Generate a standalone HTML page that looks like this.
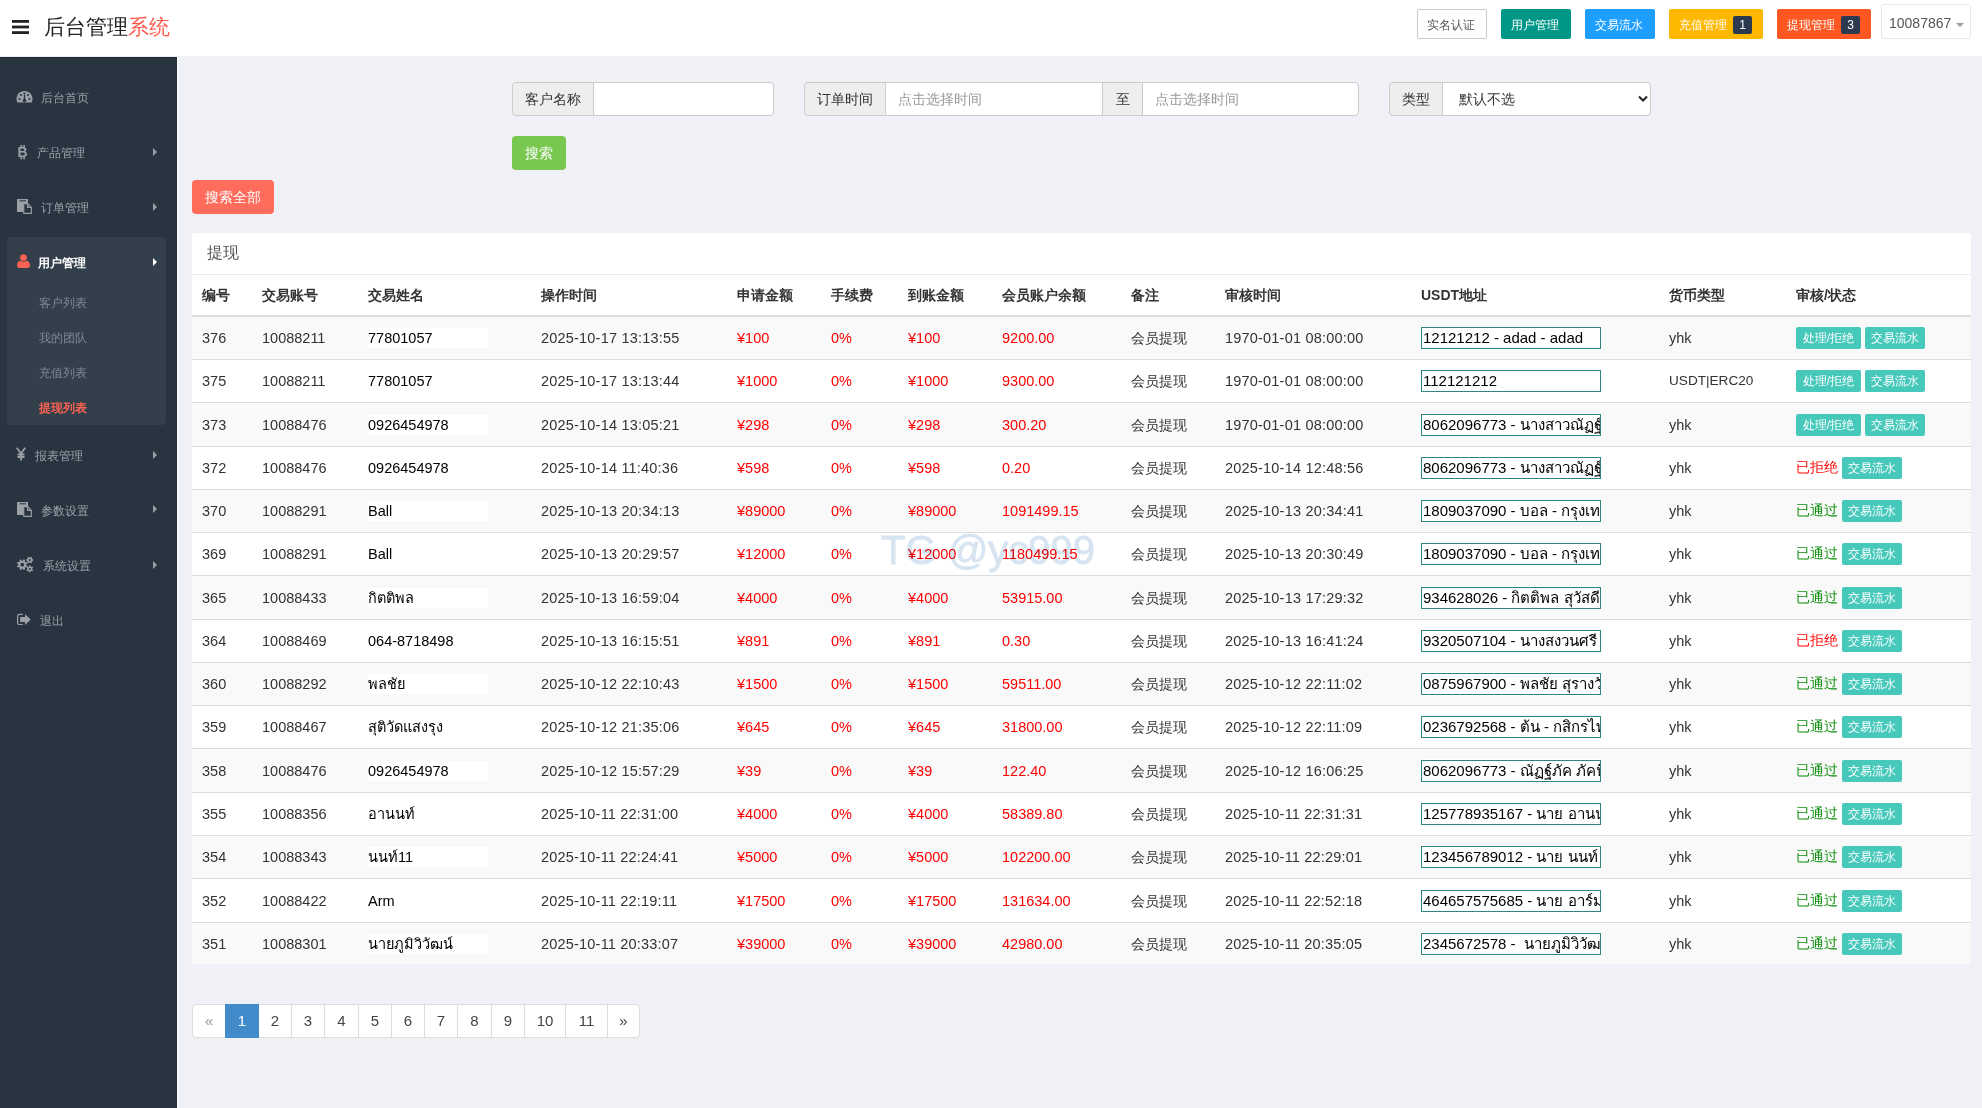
<!DOCTYPE html>
<html><head><meta charset="utf-8"><title>后台管理系统</title>
<style>
*{box-sizing:border-box}
html,body{margin:0;padding:0;width:1982px;height:1108px;overflow:hidden;background:#f0f1f6;font-family:"Liberation Sans",sans-serif;color:#333}
.a{position:absolute;white-space:nowrap}
#hdr{position:absolute;left:0;top:0;width:1982px;height:56px;background:#fff}
#title{position:absolute;left:44px;top:14px;font-size:21px;line-height:26px;color:#222;white-space:nowrap}
#title b{font-weight:normal;color:#ff5c4d}
.hb{position:absolute;top:9px;height:30px;font-size:12px;line-height:32px;color:#fff;border-radius:2px;padding-left:10px;white-space:nowrap}
.badge{position:absolute;top:7px;width:19px;height:18px;background:#2c3a50;border-radius:2px;color:#fff;font-size:12px;line-height:18px;text-align:center}
#side{position:absolute;left:0;top:57px;width:177px;height:1051px;background:#293441;border-top:1px solid #1e2935;border-right:1px solid #222d3a}
#sideline{position:absolute;left:177px;top:56px;width:1px;height:1052px;background:#fff}
.mi{position:absolute;font-size:12px;line-height:14px;color:#9ca1a8;white-space:nowrap}
.arr{position:absolute;left:153px;width:0;height:0;border-top:4px solid transparent;border-bottom:4px solid transparent;border-left:4px solid #9ca1a8}
.ic{position:absolute}
.grp{position:absolute;left:7px;top:237px;width:159px;height:188px;background:#343f4c;border-radius:4px}
.ig{position:absolute;top:82px;height:34px;font-size:14px;white-space:nowrap}
.ad{position:absolute;top:0;height:34px;background:#eee;border:1px solid #ccc;color:#333;line-height:32px;text-align:center}
.inp{position:absolute;top:0;height:34px;background:#fff;border:1px solid #ccc;color:#999;line-height:32px;padding-left:12px}
.btn1{position:absolute;height:34px;border-radius:4px;color:#fff;font-size:14px;line-height:34px;text-align:center;white-space:nowrap}
#panel{position:absolute;left:192px;top:233px;width:1779px;height:731px;background:#fff;border-radius:3px}
#ptitle{position:absolute;left:15px;top:9px;font-size:16px;line-height:22px;color:#555}
#phead{position:absolute;left:0;top:41px;width:1779px;height:1px;background:#e9ecf0}
.th{position:absolute;top:55px;font-size:14px;line-height:14px;font-weight:bold;color:#333;white-space:nowrap}
#thb{position:absolute;left:0;top:82px;width:1779px;height:2px;background:#ddd}
.row{position:absolute;left:0;width:1779px;background:#fff}
.row.s{background:#f9f9f9}
.row.bt{border-top:1px solid #ddd}
.row .c{position:absolute;top:50%;transform:translateY(-50%);font-size:14.5px;line-height:16px;white-space:nowrap;color:#333}
.row .red{color:#f00}
.row .dt{letter-spacing:0.2px}
.row .ok{color:#0c8f0c;font-size:14px;margin-top:-1px}
.row .rej{color:#f00;font-size:14px;margin-top:-1px}
.row .nm{position:absolute;top:50%;margin-top:-10px;height:20px;width:120px;background:#fff;font-size:14.5px;line-height:20px;color:#000;white-space:nowrap;overflow:hidden}
.row .addr{position:absolute;top:50%;margin-top:-11px;height:22px;width:180px;background:#fff;border:1px solid #2f8580;box-shadow:0 0 0 1px #fff;font-size:15px;line-height:20px;color:#000;white-space:pre;overflow:hidden;padding-left:1px}
.row .btn{position:absolute;top:50%;margin-top:-11px;height:22px;background:#46c8bb;border-radius:2px;color:#fff;font-size:12px;line-height:22px;text-align:center;white-space:nowrap}
#pg{position:absolute;left:0;top:0}
.pi{position:absolute;top:1004px;height:34px;background:#fff;border:1px solid #ddd;color:#444;font-size:15px;line-height:32px;text-align:center}
#wm{position:absolute;left:881px;top:527px;font-size:40px;line-height:46px;color:#d7e4f1;-webkit-text-stroke:0.8px #d7e4f1;mix-blend-mode:multiply;white-space:nowrap;pointer-events:none}
</style></head><body>
<div id="hdr">
  <svg class="ic" style="left:0;top:0" width="40" height="56"><rect x="12" y="20" width="17" height="2.8" fill="#222"/><rect x="12" y="25.6" width="17" height="2.8" fill="#222"/><rect x="12" y="31.2" width="17" height="2.8" fill="#222"/></svg>
  <div id="title">后台管理<b>系统</b></div>
  <div class="hb" style="left:1417px;width:70px;background:#fff;border:1px solid #c9c9c9;color:#555;line-height:30px;padding-left:9px">实名认证</div>
  <div class="hb" style="left:1501px;width:70px;background:#009688">用户管理</div>
  <div class="hb" style="left:1585px;width:70px;background:#1e9fff">交易流水</div>
  <div class="hb" style="left:1669px;width:94px;background:#ffb800">充值管理<span class="badge" style="left:64px">1</span></div>
  <div class="hb" style="left:1777px;width:94px;background:#ff5722">提现管理<span class="badge" style="left:64px">3</span></div>
  <div style="position:absolute;left:1881px;top:4px;width:90px;height:35px;border:1px solid #e6e6e6;border-radius:3px;background:#fff">
    <span class="a" style="left:7px;top:10px;font-size:14px;line-height:16px;color:#555">10087867</span>
    <span class="a" style="left:74px;top:18px;width:0;height:0;border-left:4px solid transparent;border-right:4px solid transparent;border-top:4px solid #999"></span>
  </div>
</div>
<div id="side"></div>
<div id="sideline"></div>
<div class="grp"></div>
<!-- sidebar menu -->
<svg class="ic" style="left:16px;top:90px" width="17" height="14" viewBox="0 0 17 14"><path d="M8.5 1C4 1 0.5 4.6 0.5 9c0 1.3 0.3 2.5 0.8 3.5h14.4c0.5-1 0.8-2.2 0.8-3.5C16.5 4.6 13 1 8.5 1z" fill="#9ca1a8"/><circle cx="3.5" cy="9" r="1.1" fill="#293441"/><circle cx="5" cy="5" r="1.1" fill="#293441"/><circle cx="8.5" cy="3.5" r="1.1" fill="#293441"/><circle cx="13.5" cy="9" r="1.1" fill="#293441"/><circle cx="12" cy="5" r="1.1" fill="#293441"/><path d="M8.5 4.8V10" stroke="#293441" stroke-width="1.3"/><circle cx="8.5" cy="10.6" r="1.8" fill="#293441"/></svg>
<div class="mi" style="left:41px;top:91px">后台首页</div>

<svg class="ic" style="left:16px;top:144px" width="13" height="16" viewBox="0 0 13 16"><g transform="translate(1.5,0)"><text x="0" y="13.2" font-family="Liberation Sans" font-weight="bold" font-size="14" fill="#9ca1a8">B</text><rect x="3" y="1" width="1.6" height="2.5" fill="#9ca1a8"/><rect x="5.8" y="1" width="1.6" height="2.5" fill="#9ca1a8"/><rect x="3" y="12.8" width="1.6" height="2.5" fill="#9ca1a8"/><rect x="5.8" y="12.8" width="1.6" height="2.5" fill="#9ca1a8"/></g></svg>
<div class="mi" style="left:37px;top:146px">产品管理</div>
<div class="arr" style="top:148px"></div>

<svg class="ic" style="left:17px;top:199px" width="16" height="16" viewBox="0 0 16 16"><rect x="0" y="0" width="11" height="13" fill="#9ca1a8"/><rect x="2.5" y="1.3" width="6.5" height="1" fill="#293441"/><path d="M6.75 4.65H10.6L14.35 8.4V14.35H6.75Z" fill="#293441" stroke="#9ca1a8" stroke-width="1.1"/><path d="M10.6 4.65V8.4H14.35" fill="none" stroke="#9ca1a8" stroke-width="1.1"/></svg>
<div class="mi" style="left:41px;top:201px">订单管理</div>
<div class="arr" style="top:203px"></div>

<svg class="ic" style="left:17px;top:254px" width="13" height="14" viewBox="0 0 13 14"><circle cx="6.5" cy="3.6" r="3.4" fill="#fb6251"/><path d="M0 11.5c0-3 1.8-4.8 3.5-4.8c0.9 0.7 1.9 1 3 1s2.1-0.3 3-1c1.7 0 3.5 1.8 3.5 4.8c0 1.5-1 2.5-2.3 2.5h-8.4c-1.3 0-2.3-1-2.3-2.5z" fill="#fb6251"/></svg>
<div class="mi" style="left:38px;top:256px;color:#fff;font-weight:bold">用户管理</div>
<div class="arr" style="top:258px;border-left-color:#fff"></div>
<div class="mi" style="left:39px;top:296px;color:#7f8893">客户列表</div>
<div class="mi" style="left:39px;top:331px;color:#7f8893">我的团队</div>
<div class="mi" style="left:39px;top:366px;color:#7f8893">充值列表</div>
<div class="mi" style="left:39px;top:401px;color:#fb6251;font-weight:bold">提现列表</div>

<svg class="ic" style="left:16px;top:447px" width="10" height="14" viewBox="0 0 10 14"><path d="M0.8 0.8L5 6.5L9.2 0.8M5 6.5V13.5M1.5 7.5h7M1.5 10h7" fill="none" stroke="#9ca1a8" stroke-width="1.8"/></svg>
<div class="mi" style="left:35px;top:449px">报表管理</div>
<div class="arr" style="top:451px"></div>

<svg class="ic" style="left:17px;top:502px" width="16" height="16" viewBox="0 0 16 16"><rect x="0" y="0" width="11" height="13" fill="#9ca1a8"/><rect x="2.5" y="1.3" width="6.5" height="1" fill="#293441"/><path d="M6.75 4.65H10.6L14.35 8.4V14.35H6.75Z" fill="#293441" stroke="#9ca1a8" stroke-width="1.1"/><path d="M10.6 4.65V8.4H14.35" fill="none" stroke="#9ca1a8" stroke-width="1.1"/></svg>
<div class="mi" style="left:41px;top:504px">参数设置</div>
<div class="arr" style="top:505px"></div>

<svg class="ic" style="left:12px;top:552px" width="28" height="26" viewBox="0 0 28 26"><path fill-rule="evenodd" fill="#9ca1a8" d="M14.26 13.29 L15.64 14.04 L15.02 15.53 L13.51 15.08 L12.68 15.91 L13.13 17.42 L11.64 18.04 L10.89 16.66 L9.71 16.66 L8.96 18.04 L7.47 17.42 L7.92 15.91 L7.09 15.08 L5.58 15.53 L4.96 14.04 L6.34 13.29 L6.34 12.11 L4.96 11.36 L5.58 9.87 L7.09 10.32 L7.92 9.49 L7.47 7.98 L8.96 7.36 L9.71 8.74 L10.89 8.74 L11.64 7.36 L13.13 7.98 L12.68 9.49 L13.51 10.32 L15.02 9.87 L15.64 11.36 L14.26 12.11ZM12.20 12.70A1.9 1.9 0 1 0 8.40 12.70A1.9 1.9 0 1 0 12.20 12.70ZM20.14 7.12 L21.22 7.25 L21.22 8.75 L20.14 8.88 L19.73 9.59 L20.16 10.59 L18.86 11.34 L18.21 10.47 L17.39 10.47 L16.74 11.34 L15.44 10.59 L15.87 9.59 L15.46 8.88 L14.38 8.75 L14.38 7.25 L15.46 7.12 L15.87 6.41 L15.44 5.41 L16.74 4.66 L17.39 5.53 L18.21 5.53 L18.86 4.66 L20.16 5.41 L19.73 6.41ZM18.80 8.00A1.0 1.0 0 1 0 16.80 8.00A1.0 1.0 0 1 0 18.80 8.00ZM20.27 17.31 L21.14 17.96 L20.39 19.26 L19.39 18.83 L18.68 19.24 L18.55 20.32 L17.05 20.32 L16.92 19.24 L16.21 18.83 L15.21 19.26 L14.46 17.96 L15.33 17.31 L15.33 16.49 L14.46 15.84 L15.21 14.54 L16.21 14.97 L16.92 14.56 L17.05 13.48 L18.55 13.48 L18.68 14.56 L19.39 14.97 L20.39 14.54 L21.14 15.84 L20.27 16.49ZM18.80 16.90A1.0 1.0 0 1 0 16.80 16.90A1.0 1.0 0 1 0 18.80 16.90Z"/></svg>
<div class="mi" style="left:43px;top:559px">系统设置</div>
<div class="arr" style="top:561px"></div>

<svg class="ic" style="left:12px;top:608px" width="28" height="24" viewBox="0 0 28 24"><path d="M10.8 6.4H7Q5.6 6.4 5.6 7.8V15.1Q5.6 16.5 7 16.5H10.8" fill="none" stroke="#9ca1a8" stroke-width="1.2"/><path d="M8.2 9.1H13V6.3L18.8 11.6L13 16.9V13.9H8.2Z" fill="#9ca1a8"/></svg>
<div class="mi" style="left:40px;top:614px">退出</div>

<!-- search form -->
<div class="ig" style="left:512px">
  <div class="ad" style="left:0;width:82px;border-radius:4px 0 0 4px">客户名称</div>
  <div class="inp" style="left:81px;width:181px;border-radius:0 4px 4px 0"></div>
</div>
<div class="ig" style="left:804px">
  <div class="ad" style="left:0;width:82px;border-radius:4px 0 0 4px">订单时间</div>
  <div class="inp" style="left:81px;width:218px">点击选择时间</div>
  <div class="ad" style="left:298px;width:41px">至</div>
  <div class="inp" style="left:338px;width:217px;border-radius:0 4px 4px 0">点击选择时间</div>
</div>
<div class="ig" style="left:1389px">
  <div class="ad" style="left:0;width:54px;border-radius:4px 0 0 4px">类型</div>
  <div class="inp" style="left:53px;width:209px;border-radius:0 4px 4px 0;color:#333;padding-left:16px">默认不选
    <svg style="position:absolute;left:195px;top:12px" width="10" height="8" viewBox="0 0 10 8"><path d="M1 1.5L5 5.5L9 1.5" fill="none" stroke="#222" stroke-width="2"/></svg>
  </div>
</div>
<div class="btn1" style="left:512px;top:136px;width:54px;background:#78c850">搜索</div>
<div class="btn1" style="left:192px;top:180px;width:82px;background:#ff6c5c">搜索全部</div>

<!-- panel -->
<div id="panel">
  <div id="ptitle">提现</div>
  <div id="phead"></div>
  <div class="th" style="left:10px">编号</div>
  <div class="th" style="left:70px">交易账号</div>
  <div class="th" style="left:176px">交易姓名</div>
  <div class="th" style="left:349px">操作时间</div>
  <div class="th" style="left:545px">申请金额</div>
  <div class="th" style="left:639px">手续费</div>
  <div class="th" style="left:716px">到账金额</div>
  <div class="th" style="left:810px">会员账户余额</div>
  <div class="th" style="left:939px">备注</div>
  <div class="th" style="left:1033px">审核时间</div>
  <div class="th" style="left:1229px">USDT地址</div>
  <div class="th" style="left:1477px">货币类型</div>
  <div class="th" style="left:1604px">审核/状态</div>
  <div id="thb"></div>
  <div style="position:absolute;left:0;top:0">
<div class="row s" style="top:84px;height:42px">
<span class="c" style="left:10px">376</span>
<span class="c" style="left:70px">10088211</span>
<span class="nm" style="left:176px">77801057</span>
<span class="c dt" style="left:349px">2025-10-17 13:13:55</span>
<span class="c red" style="left:545px">¥100</span>
<span class="c red" style="left:639px">0%</span>
<span class="c red" style="left:716px">¥100</span>
<span class="c red" style="left:810px">9200.00</span>
<span class="c" style="left:939px;font-size:14px">会员提现</span>
<span class="c dt" style="left:1033px">1970-01-01 08:00:00</span>
<span class="addr" style="left:1229px"><span>12121212 - adad - adad</span></span>
<span class="c" style="left:1477px">yhk</span>
<span class="btn" style="left:1604px;width:65px">处理/拒绝</span>
<span class="btn" style="left:1673px;width:60px">交易流水</span>
</div>
<div class="row bt" style="top:126px;height:43px">
<span class="c" style="left:10px">375</span>
<span class="c" style="left:70px">10088211</span>
<span class="nm" style="left:176px">77801057</span>
<span class="c dt" style="left:349px">2025-10-17 13:13:44</span>
<span class="c red" style="left:545px">¥1000</span>
<span class="c red" style="left:639px">0%</span>
<span class="c red" style="left:716px">¥1000</span>
<span class="c red" style="left:810px">9300.00</span>
<span class="c" style="left:939px;font-size:14px">会员提现</span>
<span class="c dt" style="left:1033px">1970-01-01 08:00:00</span>
<span class="addr" style="left:1229px"><span>112121212</span></span>
<span class="c" style="left:1477px;font-size:13.6px">USDT|ERC20</span>
<span class="btn" style="left:1604px;width:65px">处理/拒绝</span>
<span class="btn" style="left:1673px;width:60px">交易流水</span>
</div>
<div class="row s bt" style="top:169px;height:44px">
<span class="c" style="left:10px">373</span>
<span class="c" style="left:70px">10088476</span>
<span class="nm" style="left:176px">0926454978</span>
<span class="c dt" style="left:349px">2025-10-14 13:05:21</span>
<span class="c red" style="left:545px">¥298</span>
<span class="c red" style="left:639px">0%</span>
<span class="c red" style="left:716px">¥298</span>
<span class="c red" style="left:810px">300.20</span>
<span class="c" style="left:939px;font-size:14px">会员提现</span>
<span class="c dt" style="left:1033px">1970-01-01 08:00:00</span>
<span class="addr" style="left:1229px"><span>8062096773 - นางสาวณัฏฐ์ภัทร</span></span>
<span class="c" style="left:1477px">yhk</span>
<span class="btn" style="left:1604px;width:65px">处理/拒绝</span>
<span class="btn" style="left:1673px;width:60px">交易流水</span>
</div>
<div class="row bt" style="top:213px;height:43px">
<span class="c" style="left:10px">372</span>
<span class="c" style="left:70px">10088476</span>
<span class="nm" style="left:176px">0926454978</span>
<span class="c dt" style="left:349px">2025-10-14 11:40:36</span>
<span class="c red" style="left:545px">¥598</span>
<span class="c red" style="left:639px">0%</span>
<span class="c red" style="left:716px">¥598</span>
<span class="c red" style="left:810px">0.20</span>
<span class="c" style="left:939px;font-size:14px">会员提现</span>
<span class="c dt" style="left:1033px">2025-10-14 12:48:56</span>
<span class="addr" style="left:1229px"><span>8062096773 - นางสาวณัฏฐ์ภัทร</span></span>
<span class="c" style="left:1477px">yhk</span>
<span class="c rej" style="left:1604px">已拒绝</span>
<span class="btn" style="left:1650px;width:60px">交易流水</span>
</div>
<div class="row s bt" style="top:256px;height:43px">
<span class="c" style="left:10px">370</span>
<span class="c" style="left:70px">10088291</span>
<span class="nm" style="left:176px">Ball</span>
<span class="c dt" style="left:349px">2025-10-13 20:34:13</span>
<span class="c red" style="left:545px">¥89000</span>
<span class="c red" style="left:639px">0%</span>
<span class="c red" style="left:716px">¥89000</span>
<span class="c red" style="left:810px">1091499.15</span>
<span class="c" style="left:939px;font-size:14px">会员提现</span>
<span class="c dt" style="left:1033px">2025-10-13 20:34:41</span>
<span class="addr" style="left:1229px"><span>1809037090 - บอล - กรุงเทพ</span></span>
<span class="c" style="left:1477px">yhk</span>
<span class="c ok" style="left:1604px">已通过</span>
<span class="btn" style="left:1650px;width:60px">交易流水</span>
</div>
<div class="row bt" style="top:299px;height:43px">
<span class="c" style="left:10px">369</span>
<span class="c" style="left:70px">10088291</span>
<span class="nm" style="left:176px">Ball</span>
<span class="c dt" style="left:349px">2025-10-13 20:29:57</span>
<span class="c red" style="left:545px">¥12000</span>
<span class="c red" style="left:639px">0%</span>
<span class="c red" style="left:716px">¥12000</span>
<span class="c red" style="left:810px">1180499.15</span>
<span class="c" style="left:939px;font-size:14px">会员提现</span>
<span class="c dt" style="left:1033px">2025-10-13 20:30:49</span>
<span class="addr" style="left:1229px"><span>1809037090 - บอล - กรุงเทพ</span></span>
<span class="c" style="left:1477px">yhk</span>
<span class="c ok" style="left:1604px">已通过</span>
<span class="btn" style="left:1650px;width:60px">交易流水</span>
</div>
<div class="row s bt" style="top:342px;height:44px">
<span class="c" style="left:10px">365</span>
<span class="c" style="left:70px">10088433</span>
<span class="nm" style="left:176px">กิตติพล</span>
<span class="c dt" style="left:349px">2025-10-13 16:59:04</span>
<span class="c red" style="left:545px">¥4000</span>
<span class="c red" style="left:639px">0%</span>
<span class="c red" style="left:716px">¥4000</span>
<span class="c red" style="left:810px">53915.00</span>
<span class="c" style="left:939px;font-size:14px">会员提现</span>
<span class="c dt" style="left:1033px">2025-10-13 17:29:32</span>
<span class="addr" style="left:1229px"><span>934628026 - กิตติพล สุวัสดี - กสิกร</span></span>
<span class="c" style="left:1477px">yhk</span>
<span class="c ok" style="left:1604px">已通过</span>
<span class="btn" style="left:1650px;width:60px">交易流水</span>
</div>
<div class="row bt" style="top:386px;height:43px">
<span class="c" style="left:10px">364</span>
<span class="c" style="left:70px">10088469</span>
<span class="nm" style="left:176px">064-8718498</span>
<span class="c dt" style="left:349px">2025-10-13 16:15:51</span>
<span class="c red" style="left:545px">¥891</span>
<span class="c red" style="left:639px">0%</span>
<span class="c red" style="left:716px">¥891</span>
<span class="c red" style="left:810px">0.30</span>
<span class="c" style="left:939px;font-size:14px">会员提现</span>
<span class="c dt" style="left:1033px">2025-10-13 16:41:24</span>
<span class="addr" style="left:1229px"><span>9320507104 - นางสงวนศรี บุญมา</span></span>
<span class="c" style="left:1477px">yhk</span>
<span class="c rej" style="left:1604px">已拒绝</span>
<span class="btn" style="left:1650px;width:60px">交易流水</span>
</div>
<div class="row s bt" style="top:429px;height:43px">
<span class="c" style="left:10px">360</span>
<span class="c" style="left:70px">10088292</span>
<span class="nm" style="left:176px">พลชัย</span>
<span class="c dt" style="left:349px">2025-10-12 22:10:43</span>
<span class="c red" style="left:545px">¥1500</span>
<span class="c red" style="left:639px">0%</span>
<span class="c red" style="left:716px">¥1500</span>
<span class="c red" style="left:810px">59511.00</span>
<span class="c" style="left:939px;font-size:14px">会员提现</span>
<span class="c dt" style="left:1033px">2025-10-12 22:11:02</span>
<span class="addr" style="left:1229px"><span>0875967900 - พลชัย สุรางวัฒน์</span></span>
<span class="c" style="left:1477px">yhk</span>
<span class="c ok" style="left:1604px">已通过</span>
<span class="btn" style="left:1650px;width:60px">交易流水</span>
</div>
<div class="row bt" style="top:472px;height:43px">
<span class="c" style="left:10px">359</span>
<span class="c" style="left:70px">10088467</span>
<span class="nm" style="left:176px">สุติวัดแสงรุง</span>
<span class="c dt" style="left:349px">2025-10-12 21:35:06</span>
<span class="c red" style="left:545px">¥645</span>
<span class="c red" style="left:639px">0%</span>
<span class="c red" style="left:716px">¥645</span>
<span class="c red" style="left:810px">31800.00</span>
<span class="c" style="left:939px;font-size:14px">会员提现</span>
<span class="c dt" style="left:1033px">2025-10-12 22:11:09</span>
<span class="addr" style="left:1229px"><span>0236792568 - ต้น - กสิกรไทย</span></span>
<span class="c" style="left:1477px">yhk</span>
<span class="c ok" style="left:1604px">已通过</span>
<span class="btn" style="left:1650px;width:60px">交易流水</span>
</div>
<div class="row s bt" style="top:515px;height:44px">
<span class="c" style="left:10px">358</span>
<span class="c" style="left:70px">10088476</span>
<span class="nm" style="left:176px">0926454978</span>
<span class="c dt" style="left:349px">2025-10-12 15:57:29</span>
<span class="c red" style="left:545px">¥39</span>
<span class="c red" style="left:639px">0%</span>
<span class="c red" style="left:716px">¥39</span>
<span class="c red" style="left:810px">122.40</span>
<span class="c" style="left:939px;font-size:14px">会员提现</span>
<span class="c dt" style="left:1033px">2025-10-12 16:06:25</span>
<span class="addr" style="left:1229px"><span>8062096773 - ณัฏฐ์ภัค ภัคนิวัฒน์</span></span>
<span class="c" style="left:1477px">yhk</span>
<span class="c ok" style="left:1604px">已通过</span>
<span class="btn" style="left:1650px;width:60px">交易流水</span>
</div>
<div class="row bt" style="top:559px;height:43px">
<span class="c" style="left:10px">355</span>
<span class="c" style="left:70px">10088356</span>
<span class="nm" style="left:176px">อานนท์</span>
<span class="c dt" style="left:349px">2025-10-11 22:31:00</span>
<span class="c red" style="left:545px">¥4000</span>
<span class="c red" style="left:639px">0%</span>
<span class="c red" style="left:716px">¥4000</span>
<span class="c red" style="left:810px">58389.80</span>
<span class="c" style="left:939px;font-size:14px">会员提现</span>
<span class="c dt" style="left:1033px">2025-10-11 22:31:31</span>
<span class="addr" style="left:1229px"><span>125778935167 - นาย อานนท์</span></span>
<span class="c" style="left:1477px">yhk</span>
<span class="c ok" style="left:1604px">已通过</span>
<span class="btn" style="left:1650px;width:60px">交易流水</span>
</div>
<div class="row s bt" style="top:602px;height:43px">
<span class="c" style="left:10px">354</span>
<span class="c" style="left:70px">10088343</span>
<span class="nm" style="left:176px">นนท์11</span>
<span class="c dt" style="left:349px">2025-10-11 22:24:41</span>
<span class="c red" style="left:545px">¥5000</span>
<span class="c red" style="left:639px">0%</span>
<span class="c red" style="left:716px">¥5000</span>
<span class="c red" style="left:810px">102200.00</span>
<span class="c" style="left:939px;font-size:14px">会员提现</span>
<span class="c dt" style="left:1033px">2025-10-11 22:29:01</span>
<span class="addr" style="left:1229px"><span>123456789012 - นาย นนท์ - กสิกร</span></span>
<span class="c" style="left:1477px">yhk</span>
<span class="c ok" style="left:1604px">已通过</span>
<span class="btn" style="left:1650px;width:60px">交易流水</span>
</div>
<div class="row bt" style="top:645px;height:44px">
<span class="c" style="left:10px">352</span>
<span class="c" style="left:70px">10088422</span>
<span class="nm" style="left:176px">Arm</span>
<span class="c dt" style="left:349px">2025-10-11 22:19:11</span>
<span class="c red" style="left:545px">¥17500</span>
<span class="c red" style="left:639px">0%</span>
<span class="c red" style="left:716px">¥17500</span>
<span class="c red" style="left:810px">131634.00</span>
<span class="c" style="left:939px;font-size:14px">会员提现</span>
<span class="c dt" style="left:1033px">2025-10-11 22:52:18</span>
<span class="addr" style="left:1229px"><span>464657575685 - นาย อาร์ม มา</span></span>
<span class="c" style="left:1477px">yhk</span>
<span class="c ok" style="left:1604px">已通过</span>
<span class="btn" style="left:1650px;width:60px">交易流水</span>
</div>
<div class="row s bt" style="top:689px;height:42px">
<span class="c" style="left:10px">351</span>
<span class="c" style="left:70px">10088301</span>
<span class="nm" style="left:176px">นายภูมิวิวัฒน์</span>
<span class="c dt" style="left:349px">2025-10-11 20:33:07</span>
<span class="c red" style="left:545px">¥39000</span>
<span class="c red" style="left:639px">0%</span>
<span class="c red" style="left:716px">¥39000</span>
<span class="c red" style="left:810px">42980.00</span>
<span class="c" style="left:939px;font-size:14px">会员提现</span>
<span class="c dt" style="left:1033px">2025-10-11 20:35:05</span>
<span class="addr" style="left:1229px"><span>2345672578 -  นายภูมิวิวัฒน์</span></span>
<span class="c" style="left:1477px">yhk</span>
<span class="c ok" style="left:1604px">已通过</span>
<span class="btn" style="left:1650px;width:60px">交易流水</span>
</div>
  </div>
</div>
<div id="wm">TG @yc999</div>

<!-- pagination -->
<div class="pi" style="left:192px;width:34px;border-radius:4px 0 0 4px;color:#999">«</div>
<div class="pi" style="left:225px;width:34px;background:#428bca;border-color:#428bca;color:#fff;z-index:2">1</div>
<div class="pi" style="left:258px;width:34px">2</div>
<div class="pi" style="left:291px;width:34px">3</div>
<div class="pi" style="left:324px;width:35px">4</div>
<div class="pi" style="left:358px;width:34px">5</div>
<div class="pi" style="left:391px;width:34px">6</div>
<div class="pi" style="left:424px;width:34px">7</div>
<div class="pi" style="left:457px;width:35px">8</div>
<div class="pi" style="left:491px;width:34px">9</div>
<div class="pi" style="left:524px;width:42px">10</div>
<div class="pi" style="left:565px;width:43px">11</div>
<div class="pi" style="left:607px;width:33px;border-radius:0 4px 4px 0">»</div>
</body></html>
